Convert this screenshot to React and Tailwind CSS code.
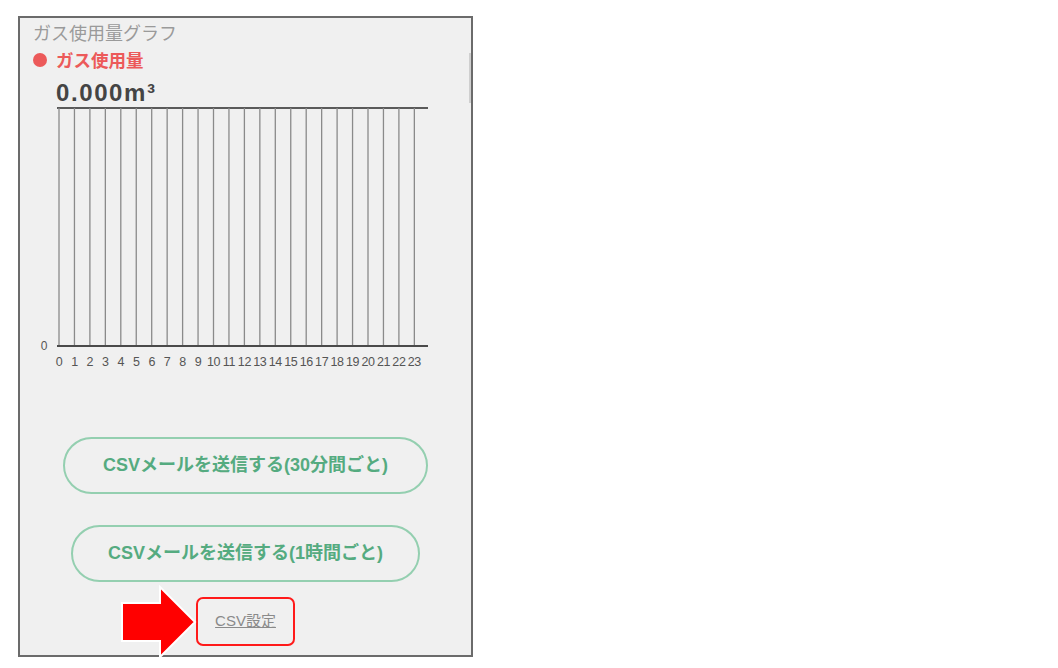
export default function App() {
  const hours = Array.from({ length: 24 }, (_, i) => i)
  const x0 = 39
  const step = 15.45

  return (
    <div className="w-[1058px] h-[668px] bg-white overflow-hidden pt-[16px] pl-[18px] font-['Liberation_Sans','Noto_Sans_CJK_JP',sans-serif]">
      <div className="relative w-[455px] h-[641px] border-2 border-[#6b6b6b] bg-[#f0f0f0] flex flex-col">
        {/* title */}
        <div className="mt-[3px] pl-[13px] text-[18px] leading-[22px] text-[#9a9a9a] font-['Noto_Sans_CJK_JP',sans-serif]">
          ガス使用量グラフ
        </div>

        {/* legend */}
        <div className="mt-[6px] pl-[13px] flex items-center h-[22px]">
          <span className="w-[14px] h-[14px] rounded-full bg-[#ec5a5a]"></span>
          <span className="ml-[9px] text-[17.5px] leading-[22px] font-bold text-[#ec5a5a] font-['Noto_Sans_CJK_JP',sans-serif]">ガス使用量</span>
        </div>

        {/* current value */}
        <div className="mt-[10px] pl-[36px] text-[24px] leading-[24px] font-bold text-[#444444] tracking-[1.6px]">
          0.000m³
        </div>

        {/* chart */}
        <svg width="451" height="270" className="block">
          <line x1="37" y1="3" x2="408" y2="3" stroke="#5a5a5a" strokeWidth="2" />
          {hours.map((h) => (
            <line key={h} x1={x0 + h * step} y1="3" x2={x0 + h * step} y2="241" stroke="#8a8a8a" strokeWidth="1.3" />
          ))}
          <line x1="37" y1="241" x2="408" y2="241" stroke="#4a4a4a" strokeWidth="2" />
          <text x="24" y="245" fontSize="12" fill="#555555" textAnchor="middle" fontFamily="Liberation Sans, sans-serif">0</text>
          {hours.map((h) => (
            <text key={h} x={x0 + h * step} y="261" fontSize="12.5" fill="#555555" textAnchor="middle" fontFamily="Liberation Sans, sans-serif" letterSpacing="-0.4">
              {h}
            </text>
          ))}
        </svg>

        {/* buttons */}
        <button className="mt-[62px] ml-[43px] w-[365px] h-[57px] rounded-full border-2 border-[#94cfb0] text-[#55ab80] text-[18px] font-bold flex items-center justify-center">
          CSVメールを送信する(30分間ごと)
        </button>
        <button className="mt-[31px] ml-[51px] w-[349px] h-[57px] rounded-full border-2 border-[#94cfb0] text-[#55ab80] text-[18px] font-bold flex items-center justify-center">
          CSVメールを送信する(1時間ごと)
        </button>

        {/* csv setting */}
        <div className="mt-[15px] ml-[176px] w-[99px] h-[49px] rounded-[7px] border-2 border-[#ff1a1a] flex items-center justify-center">
          <span className="text-[15px] text-[#8a8a8a] underline font-['Liberation_Sans','Noto_Sans_CJK_JP',sans-serif]">CSV設定</span>
        </div>

        {/* scrollbar */}
        <div className="absolute left-[449px] top-[35px] w-[2px] h-[50px] bg-[#cfcfcf]"></div>

        {/* arrow */}
        <svg className="absolute left-[100px] top-[567px]" width="80" height="94">
          <polygon points="2,18 40,18 40,2 75,37 40,72 40,56 2,56" fill="#ff0000" stroke="#ffffff" strokeWidth="2" strokeLinejoin="miter" />
        </svg>
      </div>
    </div>
  )
}
